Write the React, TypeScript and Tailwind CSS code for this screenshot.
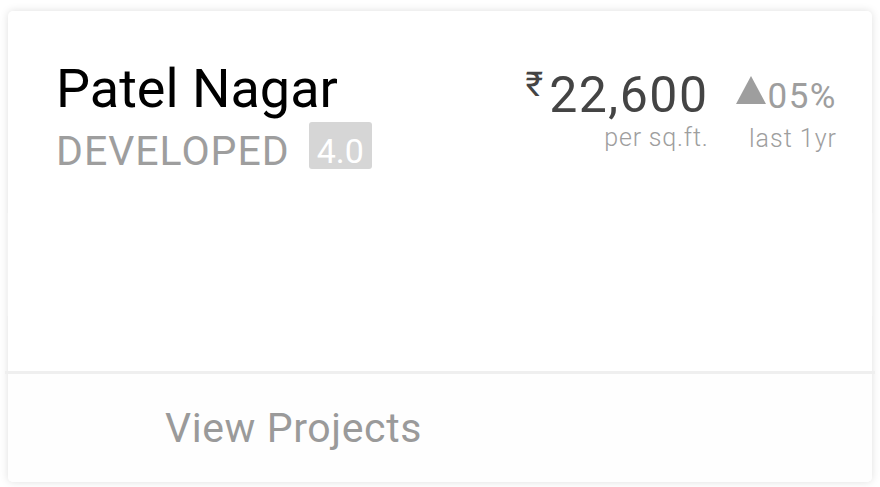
const App = () => {
  return (
    <div className="w-[880px] h-[487px] bg-white pt-[11px] px-[8px] font-['Roboto',sans-serif]">
      <div className="h-[471px] bg-white rounded-[5px] shadow-[0_0_9px_rgba(0,0,0,0.13)] flex flex-col">
        {/* header */}
        <div className="flex justify-between pl-[48px] pr-[35px] pt-[51px]">
          <div>
            <div className="text-[54px] leading-none text-black">Patel Nagar</div>
            <div className="flex items-end mt-[6px]">
              <span className="text-[41px] leading-none tracking-[1px] text-[#9e9e9e]">DEVELOPED</span>
              <span className="ml-[19px] mb-[3px] h-[47px] inline-flex items-end bg-[#d6d6d6] text-white text-[34px] leading-none rounded-[3px] px-[8px] pb-[1px]">
                4.0
              </span>
            </div>
          </div>

          <div className="flex gap-[27px] pt-[8px]">
            <div className="flex flex-col items-end">
              <div className="flex items-start text-[#444444]">
                <span className="text-[34px] leading-none -mt-[3px] mr-[6px]">₹</span>
                <span className="text-[50px] leading-none tracking-[1.5px]">22,600</span>
              </div>
              <span className="text-[25px] font-light leading-none tracking-[0.8px] text-[#9e9e9e] mt-[5px]">
                per sq.ft.
              </span>
            </div>
            <div className="flex flex-col items-end">
              <div className="flex items-start text-[#9e9e9e] mt-[6px]">
                <svg width="30" height="28" viewBox="0 0 30 28" className="mr-[2px]">
                  <polygon points="15,0 30,28 0,28" fill="#9e9e9e" />
                </svg>
                <span className="text-[35px] leading-none tracking-[1.5px] mt-[3px]">05%</span>
              </div>
              <span className="text-[25px] font-light leading-none tracking-[1px] text-[#9e9e9e] mt-[12px]">
                last 1yr
              </span>
            </div>
          </div>
        </div>

        {/* empty body */}
        <div className="flex-1 pt-[41px]">
          <div className="h-[103px] -mx-[1px] bg-white border-x border-[#f3f3f3]" />
        </div>

        <div className="h-[3px] bg-[#efefef] -mx-[3px]" />

        <div className="h-[108px] flex items-center pl-[157px] bg-[#fefefe] rounded-b-[5px]">
          <span className="text-[41px] leading-none tracking-[0.6px] text-[#9a9a9a]">View Projects</span>
        </div>
      </div>
    </div>
  );
};

export default App;
